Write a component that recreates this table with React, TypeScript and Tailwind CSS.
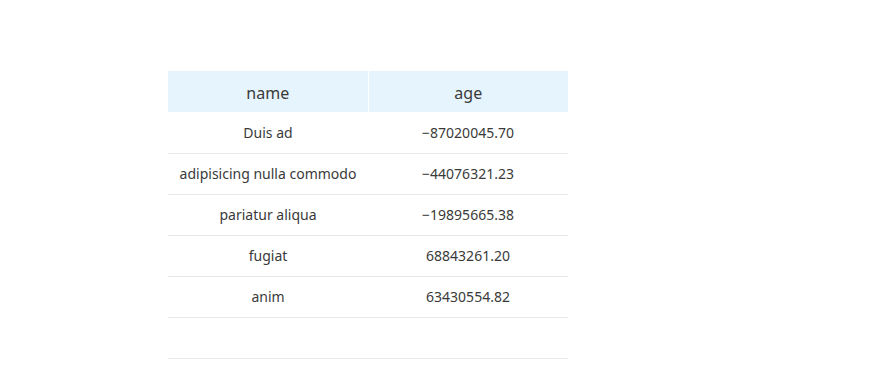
import React from "react";

const rows = [
  ["Duis ad", "−87020045.70"],
  ["adipisicing nulla commodo", "−44076321.23"],
  ["pariatur aliqua", "−19895665.38"],
  ["fugiat", "68843261.20"],
  ["anim", "63430554.82"],
  ["", ""],
];

export default function App() {
  return (
    <div className="w-[877px] h-[378px] bg-white pt-[71px] pl-[168px]" style={{ fontFamily: '"Noto Sans", "Noto Sans CJK SC", sans-serif' }}>
      <table className="w-[400px] table-fixed border-collapse text-[14px] text-[#3a3a3a]">
        <thead>
          <tr className="bg-[#e6f4fd] h-[41px] text-[16px]">
            <th className="font-normal text-center border-r border-white pt-[2px]">name</th>
            <th className="font-normal text-center pt-[2px]">age</th>
          </tr>
        </thead>
        <tbody>
          {rows.map((r, i) => (
            <tr key={i} className="h-[41px] border-b border-[#e8e8ec]">
              <td className="text-center">{r[0]}</td>
              <td className="text-center">{r[1]}</td>
            </tr>
          ))}
        </tbody>
      </table>
    </div>
  );
}
